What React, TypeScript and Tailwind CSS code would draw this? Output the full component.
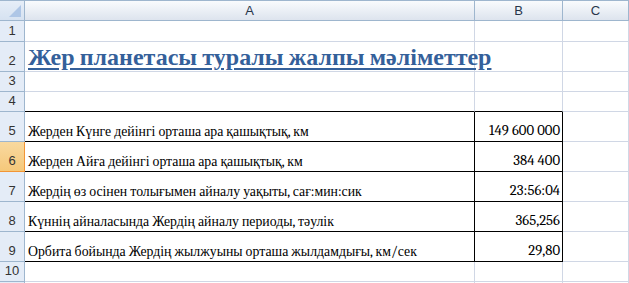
import React from 'react'

const rows = [
  { n: 1, h: 'h-[21px]' },
  { n: 2, h: 'h-[30px]', title: true },
  { n: 3, h: 'h-[20px]' },
  { n: 4, h: 'h-[20px]', tableTop: true },
  { n: 5, h: 'h-[30px]', a: 'Жерден Күнге дейінгі орташа ара қашықтық, км', b: '149 600 000' },
  { n: 6, h: 'h-[30px]', a: 'Жерден Айға дейінгі орташа ара қашықтық, км', b: '384 400', active: true },
  { n: 7, h: 'h-[30px]', a: 'Жердің өз осінен толығымен айналу уақыты, сағ:мин:сик', b: '23:56:04' },
  { n: 8, h: 'h-[30px]', a: 'Күннің айналасында Жердің айналу периоды, тәулік', b: '365,256' },
  { n: 9, h: 'h-[30px]', a: 'Орбита бойында Жердің жылжуыны орташа жылдамдығы, км/сек', b: '29,80' },
  { n: 10, h: 'h-[20px]' },
]

export default function App() {
  return (
    <div className="w-[629px] h-[283px] overflow-hidden bg-white select-none font-['Liberation_Sans',Arial,sans-serif]">
      {/* column headers */}
      <div className="flex h-[21px] border-t border-b border-[#9eb6ce]">
        <div className="relative w-[25px] border-r border-[#9eb6ce] bg-gradient-to-b from-[#e6eef8] to-[#d6e2f1]">
          <div className="absolute right-[3px] bottom-[3px] w-0 h-0 border-l-[12px] border-l-transparent border-b-[12px] border-b-[#aec6e6]" />
        </div>
        {[
          { l: 'A', w: 'w-[450px]' },
          { l: 'B', w: 'w-[88px]' },
          { l: 'C', w: 'w-[66px]' },
        ].map((c) => (
          <div key={c.l} className={`${c.w} flex items-center justify-center border-r border-[#9eb6ce] bg-gradient-to-b from-[#f9fbfd] to-[#dde4ee] text-[13px] text-[#27354a]`}>
            {c.l}
          </div>
        ))}
      </div>

      {rows.map((r) => {
        const inTable = !!r.a
        const bottomA = inTable || r.tableTop ? 'border-black' : 'border-[#d0d7e5]'
        return (
          <div key={r.n} className={`flex ${r.h}`}>
            <div
              className={`w-[25px] flex items-end justify-center pb-[1px] text-[13px] border-b border-r ${
                r.active
                  ? 'bg-gradient-to-b from-[#f9d99f] to-[#f5c87a] border-[#f29536] text-[#333]'
                  : 'bg-[#e4ecf7] border-[#9eb6ce] text-[#333]'
              }`}
            >
              {r.n}
            </div>
            <div className={`w-[450px] relative flex items-end border-b ${bottomA} border-r ${inTable ? 'border-r-black' : 'border-r-[#d0d7e5]'}`}>
              {r.title && (
                <span className="absolute left-[3px] bottom-[-1px] whitespace-nowrap text-[24px] font-bold underline decoration-[2px] underline-offset-[3px] text-[#34609a] leading-none pb-[3px] font-serif">
                  Жер планетасы туралы жалпы мәліметтер
                </span>
              )}
              {r.a && (
                <span className="pl-[3px] pb-[2px] whitespace-nowrap text-[13.8px] leading-none text-black font-serif">
                  {r.a}
                </span>
              )}
            </div>
            <div className={`w-[88px] flex items-end justify-end border-b ${bottomA} border-r ${inTable ? 'border-r-black' : 'border-r-[#d0d7e5]'}`}>
              {r.b && (
                <span className="pr-[2px] pb-[2px] whitespace-nowrap text-[14.7px] leading-none text-black font-serif">
                  {r.b}
                </span>
              )}
            </div>
            <div className="w-[66px] border-b border-r border-[#d0d7e5]" />
          </div>
        )
      })}
      <div className="flex h-[10px]">
        <div className="w-[25px] bg-[#e4ecf7] border-r border-[#9eb6ce]" />
        <div className="w-[450px] border-r border-[#d0d7e5]" />
        <div className="w-[88px] border-r border-[#d0d7e5]" />
        <div className="w-[66px] border-r border-[#d0d7e5]" />
      </div>
    </div>
  )
}
